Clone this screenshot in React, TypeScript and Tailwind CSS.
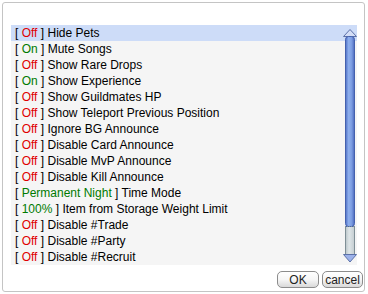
import React from "react";

type Opt = { value: string; on: boolean; label: string };

const options: Opt[] = [
  { value: "Off", on: false, label: "Hide Pets" },
  { value: "On", on: true, label: "Mute Songs" },
  { value: "Off", on: false, label: "Show Rare Drops" },
  { value: "On", on: true, label: "Show Experience" },
  { value: "Off", on: false, label: "Show Guildmates HP" },
  { value: "Off", on: false, label: "Show Teleport Previous Position" },
  { value: "Off", on: false, label: "Ignore BG Announce" },
  { value: "Off", on: false, label: "Disable Card Announce" },
  { value: "Off", on: false, label: "Disable MvP Announce" },
  { value: "Off", on: false, label: "Disable Kill Announce" },
  { value: "Permanent Night", on: true, label: "Time Mode" },
  { value: "100%", on: true, label: "Item from Storage Weight Limit" },
  { value: "Off", on: false, label: "Disable #Trade" },
  { value: "Off", on: false, label: "Disable #Party" },
  { value: "Off", on: false, label: "Disable #Recruit" },
];

// scrollbar is a little drawing, keep it as svg
const ScrollBar = () => (
  <svg width="14" height="240" viewBox="0 0 14 240" className="absolute right-0 top-0">
    <defs>
      <linearGradient id="thumb" x1="0" x2="1" y1="0" y2="0">
        <stop offset="0" stopColor="#4f6fc4" />
        <stop offset="0.35" stopColor="#8fb0ee" />
        <stop offset="0.7" stopColor="#7b9be0" />
        <stop offset="1" stopColor="#4a68bd" />
      </linearGradient>
      <linearGradient id="track" x1="0" x2="1" y1="0" y2="0">
        <stop offset="0" stopColor="#b9c4c8" />
        <stop offset="0.4" stopColor="#dfe6e8" />
        <stop offset="1" stopColor="#c3ccd0" />
      </linearGradient>
    </defs>
    {/* up arrow */}
    <path d="M0.5 11.5 L7 4.5 L13.5 11.5 Z" fill="#d4def6" stroke="#5d72a8" strokeWidth="1" />
    {/* thumb */}
    <rect x="2.5" y="11.5" width="9" height="190" rx="3" fill="url(#thumb)" stroke="#4561ad" strokeWidth="1" />
    {/* track */}
    <rect x="2.5" y="201.5" width="9" height="29" fill="url(#track)" stroke="#7f8f96" strokeWidth="1" />
    <line x1="3" y1="201.5" x2="11" y2="201.5" stroke="#4561ad" strokeDasharray="1 1" />
    {/* down arrow */}
    <path d="M0.5 229.5 L13.5 229.5 L7 237 Z" fill="#9db2ea" stroke="#5d72a8" strokeWidth="1" />
  </svg>
);

const Btn = ({ children, w }: { children: React.ReactNode; w: string }) => (
  <div
    className={`${w} h-[17px] rounded-[5px] border border-[#8c8c8c] bg-gradient-to-b from-white via-[#f6f6f6] to-[#d9d9d9] flex items-center justify-center text-[12px] leading-none text-[#222]`}
  >
    {children}
  </div>
);

export default function App() {
  return (
    <div
      className="w-[368px] h-[294px] bg-white pt-[2px] pl-[2px] pr-[3px] pb-[2px]"
      style={{ fontFamily: '"Liberation Sans", Arial, sans-serif' }}
    >
      <div className="h-full border border-[#c4c4c4] rounded-[3px] flex flex-col">
        <div className="relative ml-[8px] mt-[22px] w-[346px] h-[240px] bg-[#f5f5f5]">
          {options.map((o, i) => (
            <div
              key={i}
              className={`h-[16px] pl-[4px] text-[12px] leading-[16px] text-black whitespace-nowrap ${
                i === 0 ? "bg-[#cddcf8]" : ""
              }`}
            >
              [ <span className={o.on ? "text-[#007a00]" : "text-[#e00000]"}>{o.value}</span> ] {o.label}
            </div>
          ))}
          <ScrollBar />
        </div>
        <div className="flex justify-end gap-[3px] pr-[1px] mt-[6px]">
          <Btn w="w-[42px]">OK</Btn>
          <Btn w="w-[41px]">cancel</Btn>
        </div>
      </div>
    </div>
  );
}
